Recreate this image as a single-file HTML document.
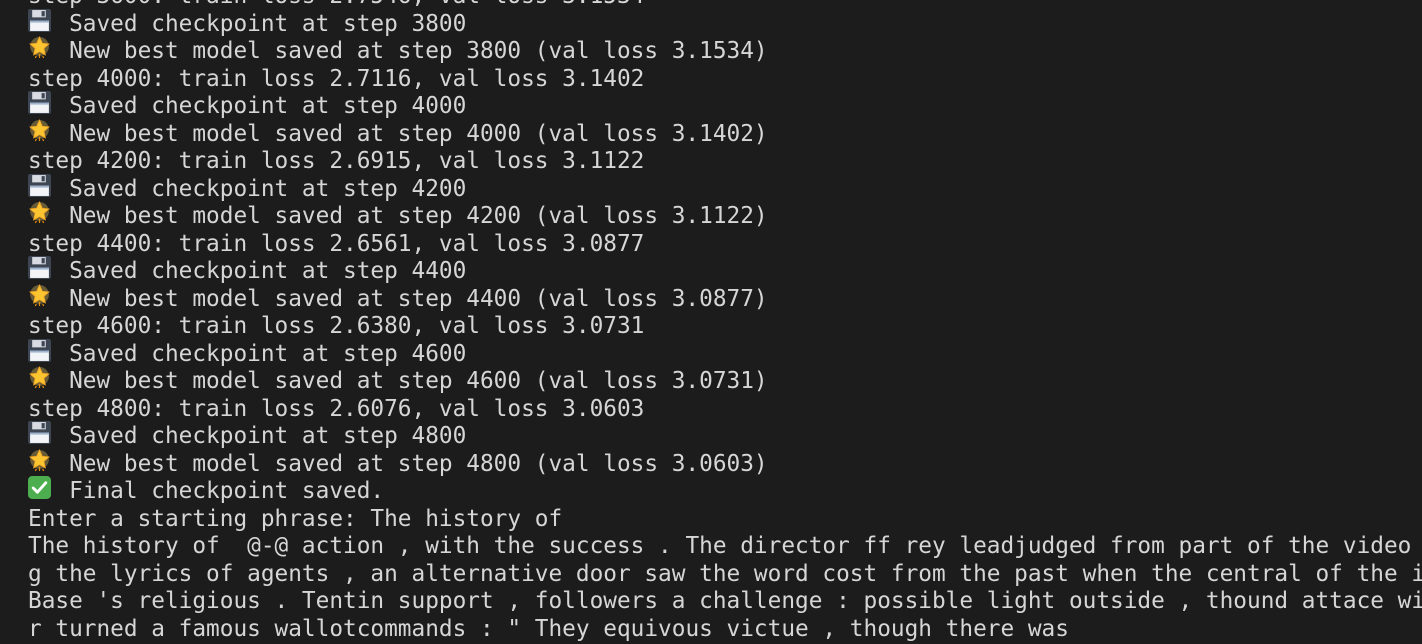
<!DOCTYPE html>
<html><head><meta charset="utf-8"><style>
html,body{margin:0;padding:0;background:#1c1c1c;width:1422px;height:644px;overflow:hidden}
pre{position:absolute;left:28px;top:-17px;margin:0;font-family:"DejaVu Sans Mono","Liberation Mono",monospace;font-size:22.75px;line-height:27.5px;color:#d6d6d6;white-space:pre}
.e{display:inline-block;width:2ch;height:1em;vertical-align:-3px;position:relative}
.e svg{position:absolute;left:0;top:-2px;width:23px;height:23px}
</style></head><body>
<pre>step 3600: train loss 2.7546, val loss 3.1534
<span class="e"><svg viewBox="0 0 22 22"><rect x="0" y="0" width="22" height="22" rx="2" fill="#3d4652"/><rect x="4" y="1" width="13" height="7" fill="#d9dde3"/><rect x="13" y="2" width="3" height="5" fill="#3d4652"/><rect x="2" y="11" width="18" height="10" fill="#f2f4f7"/><rect x="2" y="11" width="18" height="2" fill="#9fb3cf"/></svg></span> Saved checkpoint at step 3800
<span class="e"><svg viewBox="0 0 22 22"><circle cx="11" cy="10" r="9" fill="#f7d56a" opacity=".35"/><path d="M11 1l2.7 6 6.3.6-4.8 4.2 1.4 6.3L11 15l-5.6 3.1 1.4-6.3L2 7.6l6.3-.6z" fill="#fbc531" stroke="#f5a623" stroke-width=".8"/><path d="M11 17v4M8 19l-1 2M14 19l1 2" stroke="#e08e0b" stroke-width="1.2"/></svg></span> New best model saved at step 3800 (val loss 3.1534)
step 4000: train loss 2.7116, val loss 3.1402
<span class="e"><svg viewBox="0 0 22 22"><rect x="0" y="0" width="22" height="22" rx="2" fill="#3d4652"/><rect x="4" y="1" width="13" height="7" fill="#d9dde3"/><rect x="13" y="2" width="3" height="5" fill="#3d4652"/><rect x="2" y="11" width="18" height="10" fill="#f2f4f7"/><rect x="2" y="11" width="18" height="2" fill="#9fb3cf"/></svg></span> Saved checkpoint at step 4000
<span class="e"><svg viewBox="0 0 22 22"><circle cx="11" cy="10" r="9" fill="#f7d56a" opacity=".35"/><path d="M11 1l2.7 6 6.3.6-4.8 4.2 1.4 6.3L11 15l-5.6 3.1 1.4-6.3L2 7.6l6.3-.6z" fill="#fbc531" stroke="#f5a623" stroke-width=".8"/><path d="M11 17v4M8 19l-1 2M14 19l1 2" stroke="#e08e0b" stroke-width="1.2"/></svg></span> New best model saved at step 4000 (val loss 3.1402)
step 4200: train loss 2.6915, val loss 3.1122
<span class="e"><svg viewBox="0 0 22 22"><rect x="0" y="0" width="22" height="22" rx="2" fill="#3d4652"/><rect x="4" y="1" width="13" height="7" fill="#d9dde3"/><rect x="13" y="2" width="3" height="5" fill="#3d4652"/><rect x="2" y="11" width="18" height="10" fill="#f2f4f7"/><rect x="2" y="11" width="18" height="2" fill="#9fb3cf"/></svg></span> Saved checkpoint at step 4200
<span class="e"><svg viewBox="0 0 22 22"><circle cx="11" cy="10" r="9" fill="#f7d56a" opacity=".35"/><path d="M11 1l2.7 6 6.3.6-4.8 4.2 1.4 6.3L11 15l-5.6 3.1 1.4-6.3L2 7.6l6.3-.6z" fill="#fbc531" stroke="#f5a623" stroke-width=".8"/><path d="M11 17v4M8 19l-1 2M14 19l1 2" stroke="#e08e0b" stroke-width="1.2"/></svg></span> New best model saved at step 4200 (val loss 3.1122)
step 4400: train loss 2.6561, val loss 3.0877
<span class="e"><svg viewBox="0 0 22 22"><rect x="0" y="0" width="22" height="22" rx="2" fill="#3d4652"/><rect x="4" y="1" width="13" height="7" fill="#d9dde3"/><rect x="13" y="2" width="3" height="5" fill="#3d4652"/><rect x="2" y="11" width="18" height="10" fill="#f2f4f7"/><rect x="2" y="11" width="18" height="2" fill="#9fb3cf"/></svg></span> Saved checkpoint at step 4400
<span class="e"><svg viewBox="0 0 22 22"><circle cx="11" cy="10" r="9" fill="#f7d56a" opacity=".35"/><path d="M11 1l2.7 6 6.3.6-4.8 4.2 1.4 6.3L11 15l-5.6 3.1 1.4-6.3L2 7.6l6.3-.6z" fill="#fbc531" stroke="#f5a623" stroke-width=".8"/><path d="M11 17v4M8 19l-1 2M14 19l1 2" stroke="#e08e0b" stroke-width="1.2"/></svg></span> New best model saved at step 4400 (val loss 3.0877)
step 4600: train loss 2.6380, val loss 3.0731
<span class="e"><svg viewBox="0 0 22 22"><rect x="0" y="0" width="22" height="22" rx="2" fill="#3d4652"/><rect x="4" y="1" width="13" height="7" fill="#d9dde3"/><rect x="13" y="2" width="3" height="5" fill="#3d4652"/><rect x="2" y="11" width="18" height="10" fill="#f2f4f7"/><rect x="2" y="11" width="18" height="2" fill="#9fb3cf"/></svg></span> Saved checkpoint at step 4600
<span class="e"><svg viewBox="0 0 22 22"><circle cx="11" cy="10" r="9" fill="#f7d56a" opacity=".35"/><path d="M11 1l2.7 6 6.3.6-4.8 4.2 1.4 6.3L11 15l-5.6 3.1 1.4-6.3L2 7.6l6.3-.6z" fill="#fbc531" stroke="#f5a623" stroke-width=".8"/><path d="M11 17v4M8 19l-1 2M14 19l1 2" stroke="#e08e0b" stroke-width="1.2"/></svg></span> New best model saved at step 4600 (val loss 3.0731)
step 4800: train loss 2.6076, val loss 3.0603
<span class="e"><svg viewBox="0 0 22 22"><rect x="0" y="0" width="22" height="22" rx="2" fill="#3d4652"/><rect x="4" y="1" width="13" height="7" fill="#d9dde3"/><rect x="13" y="2" width="3" height="5" fill="#3d4652"/><rect x="2" y="11" width="18" height="10" fill="#f2f4f7"/><rect x="2" y="11" width="18" height="2" fill="#9fb3cf"/></svg></span> Saved checkpoint at step 4800
<span class="e"><svg viewBox="0 0 22 22"><circle cx="11" cy="10" r="9" fill="#f7d56a" opacity=".35"/><path d="M11 1l2.7 6 6.3.6-4.8 4.2 1.4 6.3L11 15l-5.6 3.1 1.4-6.3L2 7.6l6.3-.6z" fill="#fbc531" stroke="#f5a623" stroke-width=".8"/><path d="M11 17v4M8 19l-1 2M14 19l1 2" stroke="#e08e0b" stroke-width="1.2"/></svg></span> New best model saved at step 4800 (val loss 3.0603)
<span class="e"><svg viewBox="0 0 22 22"><rect x="0" y="0" width="22" height="22" rx="4" fill="#4cae4f"/><path d="M5 11.5l4 4 8-9" fill="none" stroke="#fff" stroke-width="2.8" stroke-linecap="round" stroke-linejoin="round"/></svg></span> Final checkpoint saved.
Enter a starting phrase: The history of
The history of  @-@ action , with the success . The director ff rey leadjudged from part of the video
g the lyrics of agents , an alternative door saw the word cost from the past when the central of the i
Base 's religious . Tentin support , followers a challenge : possible light outside , thound attace wi
r turned a famous wallotcommands : " They equivous victue , though there was</pre>
</body></html>
